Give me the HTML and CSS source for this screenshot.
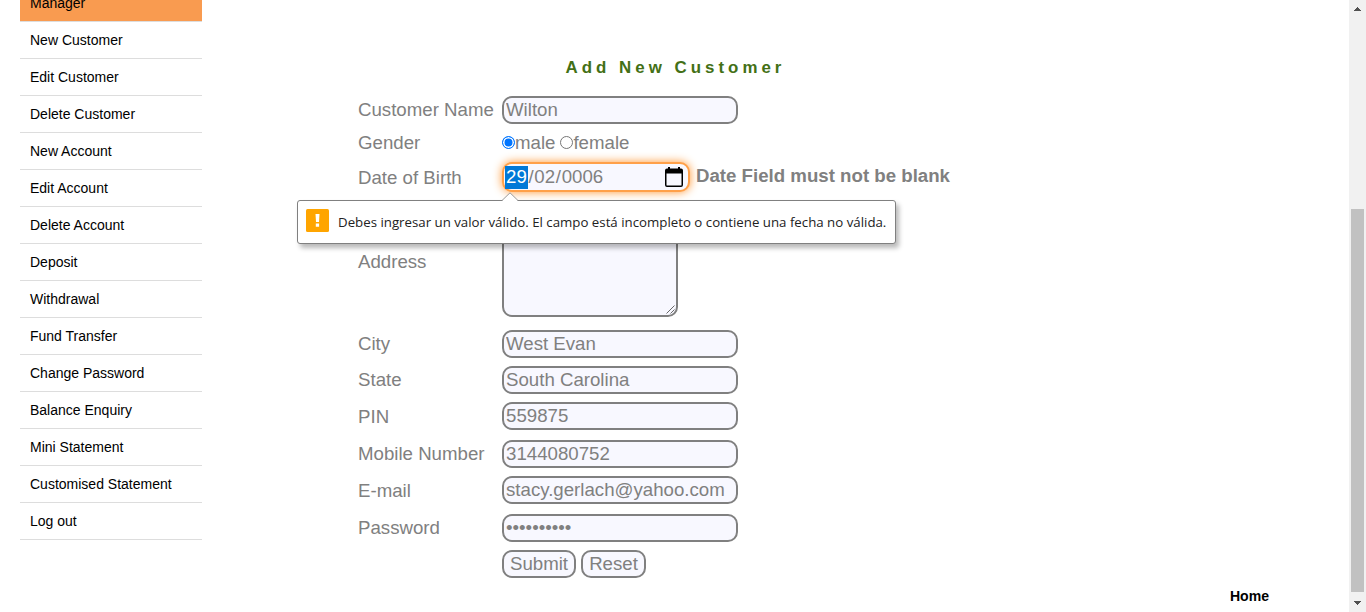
FILE: index.html
```html
<!DOCTYPE html>
<html lang="en">
<head>
<meta charset="utf-8">
<title>Add New Customer</title>
<link rel="stylesheet" href="styles.css">
</head>
<body>
<div class="page">
  <nav class="sidebar">
    <ul class="menu">
      <li class="active">Manager</li>
      <li>New Customer</li>
      <li>Edit Customer</li>
      <li>Delete Customer</li>
      <li>New Account</li>
      <li>Edit Account</li>
      <li>Delete Account</li>
      <li>Deposit</li>
      <li>Withdrawal</li>
      <li>Fund Transfer</li>
      <li>Change Password</li>
      <li>Balance Enquiry</li>
      <li>Mini Statement</li>
      <li>Customised Statement</li>
      <li>Log out</li>
    </ul>
  </nav>
  <main class="content">
    <h1 class="heading">Add New Customer</h1>
    <form class="form">
      <div class="row"><label>Customer Name</label><input class="field" type="text" value="Wilton"></div>
      <div class="row gender"><label>Gender</label><div class="radios"><i class="radio checked"></i><span class="male">male</span><i class="radio"></i><span>female</span></div></div>
      <div class="row date-row"><label>Date of Birth</label>
        <div class="date"><span class="day">29</span><span class="slash">/</span><span>02</span><span class="slash">/</span><span>0006</span>
          <svg class="calendar" width="18" height="20" viewBox="0 0 18 20"><path d="M3 0h2v1.5h8V0h2v1.5h1a2 2 0 0 1 2 2V18a2 2 0 0 1-2 2H2a2 2 0 0 1-2-2V3.500a2 2 0 0 1 2-2h1zM1.500 6.500V18a.5.5 0 0 0 .5.500h14a.5.5 0 0 0 .5-.5V6.500z" fill="#000" fill-rule="evenodd"/></svg>
        </div>
        <strong class="message">Date Field must not be blank</strong>
      </div>
      <div class="row address"><label>Address</label>
        <div class="area"><svg class="grip" width="9" height="9" viewBox="0 0 9 9"><path d="M.5 8.500l8-8M4.500 8.500l4-4" stroke="#444" stroke-width=".8" fill="none"/></svg></div>
      </div>
      <div class="row"><label>City</label><input class="field" type="text" value="West Evan"></div>
      <div class="row"><label>State</label><input class="field" type="text" value="South Carolina"></div>
      <div class="row tall"><label>PIN</label><input class="field" type="text" value="559875"></div>
      <div class="row tall low"><label>Mobile Number</label><input class="field" type="text" value="3144080752"></div>
      <div class="row tall"><label>E-mail</label><input class="field" type="text" value="stacy.gerlach@yahoo.com"></div>
      <div class="row tall low"><label>Password</label><input class="field" type="password" value="abcdefghij"></div>
      <div class="row"><span></span><div class="buttons"><button type="button" class="submit">Submit</button><button type="button" class="reset">Reset</button></div></div>
    </form>
    <a class="home">Home</a>
  </main>
  <div class="scrollbar">
    <svg class="arrow" width="17" height="17" viewBox="0 0 17 17" shape-rendering="crispEdges"><path d="M8 7h1v1h1v1h1v1h1v1H5v-1h1V9h1V8h1z" fill="#505050"/></svg>
    <div class="thumb"></div>
    <svg class="arrow" width="17" height="17" viewBox="0 0 17 17" shape-rendering="crispEdges"><path d="M5 6h7v1h-1v1h-1v1H9v1H8V9H7V8H6V7H5z" fill="#505050"/></svg>
  </div>
  <div class="tooltip">
    <svg class="pointer" width="16" height="9" viewBox="0 0 16 9"><path d="M0 9L8 .8 16 9z" fill="#fff"/><path d="M0 8.500L8 .8l8 7.700" fill="none" stroke="#999"/></svg>
    <svg width="23" height="23" viewBox="0 0 23 23"><rect width="23" height="23" rx="1.500" fill="#ffa500"/><path d="M9.500 5h4l-.5 8h-3zM9.800 14.500h3.300v3.300H9.800z" fill="#fff"/></svg>
    <span class="tooltip-text">Debes ingresar un valor válido. El campo está incompleto o contiene una fecha no válida.</span>
  </div>
</div>
</body>
</html>
```
FILE: styles.css
```css
* { box-sizing: border-box; }
body { margin: 0; background: #fff; font-family: "Liberation Sans", Arial, sans-serif; }
.page { position: relative; display: flex; height: 612px; overflow: hidden; }
.sidebar { width: 202px; padding-left: 20px; }
.menu { list-style: none; margin: -16px 0 0; padding: 0; font-size: 14px; }
.menu li { height: 37px; padding: 0 10px; line-height: 37px; border-bottom: 1px solid #ddd; color: #000; }
.menu .active { height: 38px; line-height: 39px; background: #f99b50; }
.content { width: 1147px; padding: 58px 0 0 156px; display: flex; flex-direction: column; }
.heading { margin: 0 0 15px; width: 635px; height: 19px; line-height: 20px; text-align: center; font-size: 16.900px; letter-spacing: 4px; color: #437016; }
.form { font-size: 18.667px; color: #808080; }
.row { display: grid; grid-template-columns: 136px 236px; column-gap: 8px; height: 36px; padding-top: 4px; align-items: start; }
.row label { line-height: 21px; margin-top: 3px; white-space: nowrap; }
.field { height: 28px; width: 236px; margin: 0; padding: 1px 2px; border: 2px solid #808080; border-radius: 10px; background: #f8f8ff; color: #808080; font: 18.667px "Liberation Sans", Arial, sans-serif; outline: 0; }
.tall { height: 37px; }
.tall label { margin-top: 4px; }
.low { padding-top: 5px; }
.low label { margin-top: 3px; }
.gender { height: 29px; padding-top: 1px; }
.radios { display: flex; align-items: center; line-height: 21px; margin-top: 3px; }
.radio { width: 13px; height: 13px; border: 1px solid #767676; border-radius: 50%; flex: none; }
.radio.checked { border-color: #0075ff; background: #0075ff; box-shadow: inset 0 0 0 1.500px #fff; }
.male { margin-right: 5px; }
.date-row { height: 39px; padding-top: 5px; grid-template-columns: 136px 188px auto; }
.date-row label { margin-top: 5px; }
.date { display: flex; align-items: center; height: 30px; padding: 0 5px 0 1px; border: 2px solid #ffa049; border-radius: 10px; background: #f8f8ff; box-shadow: 0 0 10px #ff9632; line-height: 21px; }
.date span { padding-bottom: 2px; }
.date .day { background: #0078d7; color: #fff; padding: 0 1px 2px; }
.date .slash { padding: 0 .7px 2px; }
.calendar { margin-left: auto; }
.message { margin: 3px 0 0 -2px; line-height: 21px; white-space: nowrap; }
.address { height: 130px; }
.address label { margin-top: 51px; }
.area { display: flex; align-items: flex-end; justify-content: flex-end; width: 176px; height: 117px; border: 2px solid #808080; border-radius: 10px; background: #f8f8ff; padding: 0 1px 1px 0; }
.buttons { display: flex; gap: 5px; }
.buttons button { height: 28px; padding: 0; border: 2px solid #808080; border-radius: 10px; background: #f8f8ff; color: #808080; font: 18.667px "Liberation Sans", Arial, sans-serif; }
.submit { width: 74px; }
.reset { width: 65px; }
.home { margin: 5px 80px 0 0; align-self: flex-end; font-size: 14.08px; font-weight: bold; line-height: 18px; color: #000; }
.scrollbar { width: 17px; display: flex; flex-direction: column; align-items: center; justify-content: space-between; background: #f1f1f1; }
.arrow { flex: none; }
.thumb { width: 13px; height: 383px; margin-top: auto; margin-bottom: 3px; background: #c1c1c1; }
.tooltip { position: absolute; left: 297px; top: 200px; width: 599px; height: 44px; display: flex; align-items: center; gap: 9px; padding: 0 8px 3px; background: #fff; border: 1px solid #808080; border-radius: 3px; box-shadow: 3px 4px 5px rgba(0, 0, 0, .28); }
.pointer { position: absolute; left: 204px; top: -9px; }
.tooltip-text { margin-top: 3px; font: 13.270px/20px "Open Sans", "Noto Sans", sans-serif; color: #222; white-space: nowrap; }
```
